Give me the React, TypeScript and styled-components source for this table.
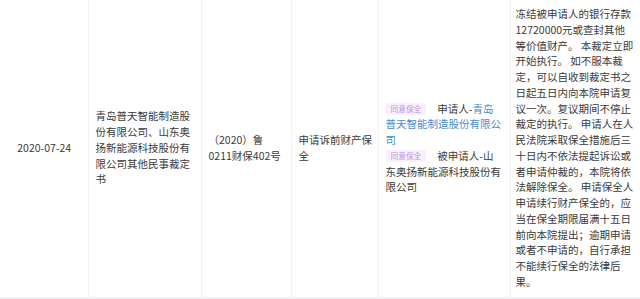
import React from "react";
import styled, { createGlobalStyle } from "styled-components";

const GlobalStyle = createGlobalStyle`
  html, body {
    margin: 0;
    background: #ffffff;
  }
  body {
    font-family: "Noto Sans CJK SC", "Liberation Sans", sans-serif;
  }
`;

const Table = styled.table`
  width: 640px;
  table-layout: fixed;
  border-collapse: collapse;
  font-size: 10.5px;
  line-height: 15.75px;
  color: #3a3a3a;
`;

const Col = styled.col<{ $w: number }>`
  width: ${(p) => p.$w}px;
`;

const Cell = styled.td`
  padding: 6px 5px 7px 7px;
  vertical-align: middle;
  text-align: left;
  border-right: 1px solid #f0f2f5;
  border-bottom: 2px solid #eef1f5;

  &:last-child {
    border-right: none;
  }
`;

const DateCell = styled(Cell)`
  text-align: center;
  padding-left: 6px;
`;

const CaseNoCell = styled(Cell)`
  padding-right: 9px;
`;

const PartyCell = styled(Cell)`
  padding-right: 7px;
`;

const RulingCell = styled(Cell)`
  padding-left: 5px;
  padding-right: 6px;
`;

const PartyLine = styled.div``;

const Tag = styled.span`
  display: inline-block;
  font-size: 7.7px;
  line-height: 12px;
  padding: 0 5px;
  margin-right: 11px;
  color: #c193e6;
  background: #f8f1fd;
  border-radius: 1px;
  vertical-align: 1px;
`;

const PartyLink = styled.span`
  color: #3f8bd8;
`;

export default function App() {
  return (
    <>
      <GlobalStyle />
      <Table>
        <colgroup>
          <Col $w={88} />
          <Col $w={113} />
          <Col $w={90} />
          <Col $w={87} />
          <Col $w={132} />
          <Col $w={130} />
        </colgroup>
        <tbody>
          <tr>
            <DateCell>2020-07-24</DateCell>
            <Cell>
              青岛普天智能制造股份有限公司、山东奥扬新能源科技股份有限公司其他民事裁定书
            </Cell>
            <CaseNoCell>（2020）鲁0211财保402号</CaseNoCell>
            <Cell>申请诉前财产保全</Cell>
            <PartyCell>
              <PartyLine>
                <Tag>同意保全</Tag>申请人-
                <PartyLink>青岛普天智能制造股份有限公司</PartyLink>
              </PartyLine>
              <PartyLine>
                <Tag>同意保全</Tag>被申请人-山东奥扬新能源科技股份有限公司
              </PartyLine>
            </PartyCell>
            <RulingCell>
              冻结被申请人的银行存款12720000元或查封其他等价值财产。 本裁定立即开始执行。 如不服本裁定，可以自收到裁定书之日起五日内向本院申请复议一次。复议期间不停止裁定的执行。 申请人在人民法院采取保全措施后三十日内不依法提起诉讼或者申请仲裁的，本院将依法解除保全。 申请保全人申请续行财产保全的，应当在保全期限届满十五日前向本院提出；逾期申请或者不申请的，自行承担不能续行保全的法律后果。
            </RulingCell>
          </tr>
        </tbody>
      </Table>
    </>
  );
}
